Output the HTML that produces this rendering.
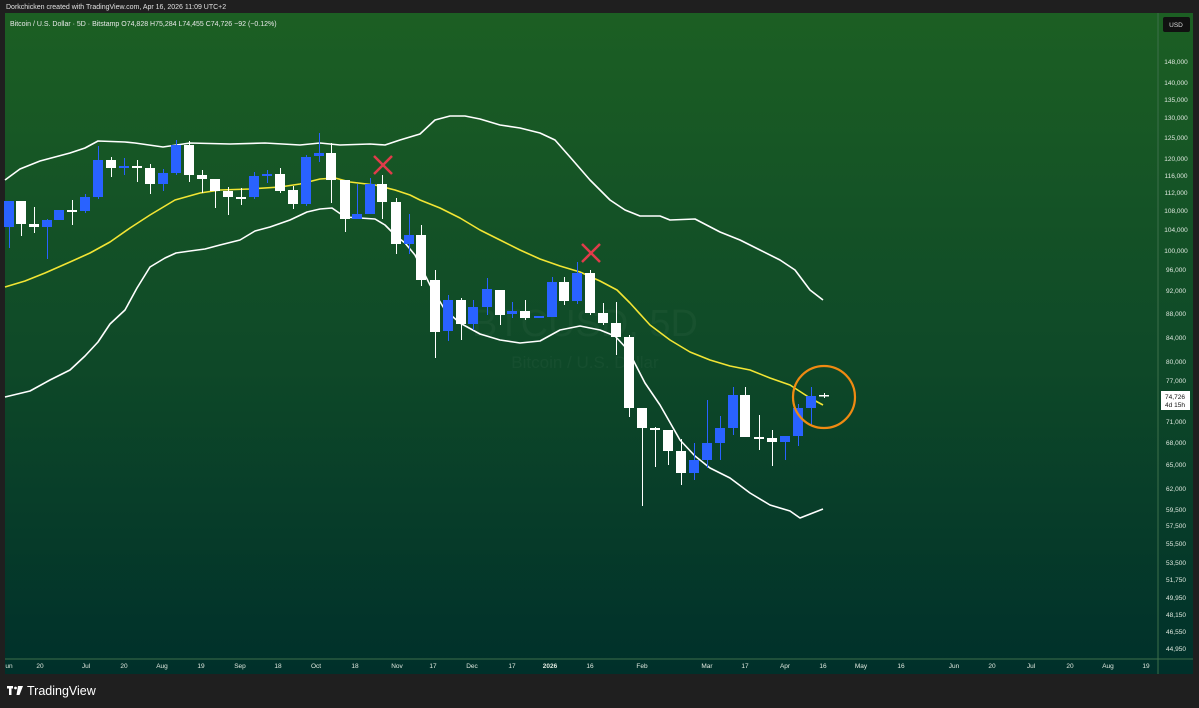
<!DOCTYPE html>
<html><head><meta charset="utf-8"><style>
body{margin:0;width:1199px;height:708px;background:#1f1f1f;overflow:hidden;font-family:"Liberation Sans",sans-serif}
svg{display:block}
</style></head><body>
<svg width="1199" height="708" viewBox="0 0 1199 708" xmlns="http://www.w3.org/2000/svg" font-family="Liberation Sans, sans-serif">
<defs><linearGradient id="bg" x1="0" y1="0" x2="0" y2="1">
<stop offset="0" stop-color="#1c5f23"/><stop offset="0.5" stop-color="#0f4a28"/><stop offset="1" stop-color="#00302a"/></linearGradient></defs>
<rect width="1199" height="708" fill="#1f1f1f"/>
<rect x="5" y="13" width="1188" height="661" fill="url(#bg)"/>
<text x="6" y="9" font-size="7" fill="#e0e0e0">Dorkchicken created with TradingView.com, Apr 16, 2026 11:09 UTC+2</text>
<text x="10" y="26" font-size="7" fill="#e8e8e8">Bitcoin / U.S. Dollar · 5D · Bitstamp  O74,828  H75,284  L74,455  C74,726  −92 (−0.12%)</text>
<line x1="1158" y1="13" x2="1158" y2="674" stroke="#3d6e4a" stroke-width="1"/>
<line x1="5" y1="659" x2="1193" y2="659" stroke="#3d6e4a" stroke-width="1"/>
<text x="585" y="336" font-size="38" fill="#ffffff" fill-opacity="0.035" text-anchor="middle">BTCUSD, 5D</text>
<text x="585" y="368" font-size="17" fill="#ffffff" fill-opacity="0.035" text-anchor="middle">Bitcoin / U.S. Dollar</text>
<g fill="none" stroke-width="1.6" stroke-linejoin="round">
<polyline stroke="#ffffff" points="5,180 20,169 40,161 70,153 85,148 98,141 125,142 135,143 163,147 190,143 230,144 265,143 300,145 320,143 340,145 370,144 385,145 400,140 420,134 435,120 450,116 465,116 480,119 500,125 520,128 540,133 555,140 570,157 590,180 610,200 625,210 640,216 660,216 670,220 695,219 720,232 740,240 760,250 780,260 795,270 810,290 823,300"/>
<polyline stroke="#f2e534" points="5,287 25,281 45,273 70,262 90,253 110,242 130,228 150,215 175,200 200,193 220,190 250,189 280,187 300,184 320,179 335,178 350,182 375,185 395,190 410,195 420,200 440,208 460,218 480,230 500,240 520,250 540,259 560,266 580,272 600,281 617,290 630,303 650,325 670,340 690,352 710,360 730,366 750,370 770,378 790,385 810,398 823,405"/>
<polyline stroke="#ffffff" points="5,397 30,391 50,380 70,370 85,356 98,342 110,324 125,310 137,288 150,267 165,258 176,253 190,251 205,249 220,245 240,240 255,231 270,227 290,220 307,212 320,209 332,208 345,217 360,218 375,219 385,225 395,235 405,243 415,255 430,285 445,310 460,323 480,334 500,340 520,343 540,341 560,330 580,326 600,330 615,336 628,350 645,383 660,405 680,440 695,456 710,468 730,478 750,493 770,505 790,511 800,518 823,509"/>
</g>
<path stroke="#2962ff" stroke-width="1" fill="none" d="M9.5 201V248M47.5 219V259M59.5 210V220M85.5 194V213M98.5 146V199M124.5 158V175M163.5 169V191M176.5 140V175M254.5 172V199M267.5 170V183M306.5 155V206M319.5 133V162M357.5 184V219M370.5 178V214M409.5 214V254M448.5 295V341M473.5 300V330M487.5 278V315M512.5 302V318M539.5 316V318M552.5 277V317M577.5 262V304M694.5 443V480M707.5 400V468M720.5 416V460M733.5 387V435M785.5 436V460M798.5 404V446M811.5 387V425"/>
<g fill="#2962ff">
<rect x="4" y="201" width="10" height="26"/><rect x="42" y="220" width="10" height="7"/><rect x="54" y="210" width="10" height="10"/><rect x="80" y="197" width="10" height="14"/><rect x="93" y="160" width="10" height="37"/><rect x="119" y="166" width="10" height="2"/><rect x="158" y="173" width="10" height="11"/><rect x="171" y="145" width="10" height="28"/><rect x="249" y="176" width="10" height="21"/><rect x="262" y="174" width="10" height="2"/><rect x="301" y="157" width="10" height="47"/><rect x="314" y="153" width="10" height="3"/><rect x="352" y="214" width="10" height="5"/><rect x="365" y="184" width="10" height="30"/><rect x="404" y="235" width="10" height="9"/><rect x="443" y="300" width="10" height="31"/><rect x="468" y="307" width="10" height="17"/><rect x="482" y="289" width="10" height="18"/><rect x="507" y="311" width="10" height="3"/><rect x="534" y="316" width="10" height="2"/><rect x="547" y="282" width="10" height="35"/><rect x="572" y="273" width="10" height="28"/><rect x="689" y="460" width="10" height="13"/><rect x="702" y="443" width="10" height="17"/><rect x="715" y="428" width="10" height="15"/><rect x="728" y="395" width="10" height="33"/><rect x="780" y="436" width="10" height="6"/><rect x="793" y="408" width="10" height="28"/><rect x="806" y="396" width="10" height="12"/>
</g>
<path stroke="#ffffff" stroke-width="1" fill="none" d="M21.5 201V236M34.5 207V233M72.5 200V225M111.5 157V177M137.5 160V182M150.5 164V194M189.5 141V182M202.5 170V193M215.5 179V208M228.5 187V215M241.5 188V205M280.5 168V193M293.5 186V209M331.5 143V203M345.5 180V232M382.5 175V219M396.5 198V254M421.5 225V286M435.5 270V358M461.5 298V340M500.5 290V325M525.5 300V320M564.5 277V305M590.5 270V315M603.5 303V325M616.5 302V355M629.5 335V417M642.5 408V506M655.5 427V467M668.5 430V465M681.5 439V485M745.5 387V437M759.5 415V450M772.5 430V466M824.5 393V398"/>
<g fill="#ffffff">
<rect x="16" y="201" width="10" height="23"/><rect x="29" y="224" width="10" height="3"/><rect x="67" y="210" width="10" height="2"/><rect x="106" y="160" width="10" height="8"/><rect x="132" y="166" width="10" height="2"/><rect x="145" y="168" width="10" height="16"/><rect x="184" y="145" width="10" height="30"/><rect x="197" y="175" width="10" height="4"/><rect x="210" y="179" width="10" height="12"/><rect x="223" y="191" width="10" height="6"/><rect x="236" y="197" width="10" height="2"/><rect x="275" y="174" width="10" height="17"/><rect x="288" y="190" width="10" height="14"/><rect x="326" y="153" width="10" height="27"/><rect x="340" y="180" width="10" height="39"/><rect x="377" y="184" width="10" height="18"/><rect x="391" y="202" width="10" height="42"/><rect x="416" y="235" width="10" height="45"/><rect x="430" y="280" width="10" height="52"/><rect x="456" y="300" width="10" height="24"/><rect x="495" y="290" width="10" height="25"/><rect x="520" y="311" width="10" height="7"/><rect x="559" y="282" width="10" height="19"/><rect x="585" y="273" width="10" height="40"/><rect x="598" y="313" width="10" height="10"/><rect x="611" y="323" width="10" height="14"/><rect x="624" y="337" width="10" height="71"/><rect x="637" y="408" width="10" height="20"/><rect x="650" y="428" width="10" height="2"/><rect x="663" y="430" width="10" height="21"/><rect x="676" y="451" width="10" height="22"/><rect x="740" y="395" width="10" height="42"/><rect x="754" y="437" width="10" height="2"/><rect x="767" y="438" width="10" height="4"/><rect x="819" y="395" width="10" height="1.5"/>
</g>
<g stroke="#e03c4a" stroke-width="2.5"><path d="M374,156 L392,174 M392,156 L374,174"/><path d="M582,244 L600,262 M600,244 L582,262"/></g>
<circle cx="824" cy="397" r="31" fill="none" stroke="#f08a12" stroke-width="2.2"/>
<g font-size="6.5" fill="#dfe8df" text-anchor="middle">
<rect x="1163" y="17" width="27" height="15" rx="2" fill="#111"/><text x="1176" y="27" fill="#ddd">USD</text>
<text x="1176" y="64">148,000</text><text x="1176" y="85">140,000</text><text x="1176" y="102">135,000</text><text x="1176" y="120">130,000</text><text x="1176" y="140">125,000</text><text x="1176" y="161">120,000</text><text x="1176" y="178">116,000</text><text x="1176" y="195">112,000</text><text x="1176" y="213">108,000</text><text x="1176" y="232">104,000</text><text x="1176" y="253">100,000</text><text x="1176" y="272">96,000</text><text x="1176" y="293">92,000</text><text x="1176" y="316">88,000</text><text x="1176" y="340">84,000</text><text x="1176" y="364">80,000</text><text x="1176" y="383">77,000</text><text x="1176" y="424">71,000</text><text x="1176" y="445">68,000</text><text x="1176" y="467">65,000</text><text x="1176" y="491">62,000</text><text x="1176" y="512">59,500</text><text x="1176" y="528">57,500</text><text x="1176" y="546">55,500</text><text x="1176" y="565">53,500</text><text x="1176" y="582">51,750</text><text x="1176" y="600">49,950</text><text x="1176" y="617">48,150</text><text x="1176" y="634">46,550</text><text x="1176" y="651">44,950</text>
<rect x="1161" y="391" width="29" height="19" fill="#ffffff"/><text x="1175" y="399" fill="#111">74,726</text><text x="1175" y="407" fill="#111">4d 15h</text>
</g>
<g font-size="6.5" fill="#dfe8df" text-anchor="middle">
<text x="9" y="668">un</text><text x="40" y="668">20</text><text x="86" y="668">Jul</text><text x="124" y="668">20</text><text x="162" y="668">Aug</text><text x="201" y="668">19</text><text x="240" y="668">Sep</text><text x="278" y="668">18</text><text x="316" y="668">Oct</text><text x="355" y="668">18</text><text x="397" y="668">Nov</text><text x="433" y="668">17</text><text x="472" y="668">Dec</text><text x="512" y="668">17</text><text x="550" y="668" font-weight="bold">2026</text><text x="590" y="668">16</text><text x="642" y="668">Feb</text><text x="707" y="668">Mar</text><text x="745" y="668">17</text><text x="785" y="668">Apr</text><text x="823" y="668">16</text><text x="861" y="668">May</text><text x="901" y="668">16</text><text x="954" y="668">Jun</text><text x="992" y="668">20</text><text x="1031" y="668">Jul</text><text x="1070" y="668">20</text><text x="1108" y="668">Aug</text><text x="1146" y="668">19</text>
</g>
<g fill="#ffffff"><rect x="7" y="686" width="6" height="2.5"/><rect x="9" y="686" width="2.5" height="9"/><circle cx="15.5" cy="688" r="1.4"/><path d="M18,686 L23,686 L19.5,695 L16.5,695 Z"/></g>
<text x="27" y="695" font-size="12.5" fill="#ffffff">TradingView</text>
</svg>
</body></html>
